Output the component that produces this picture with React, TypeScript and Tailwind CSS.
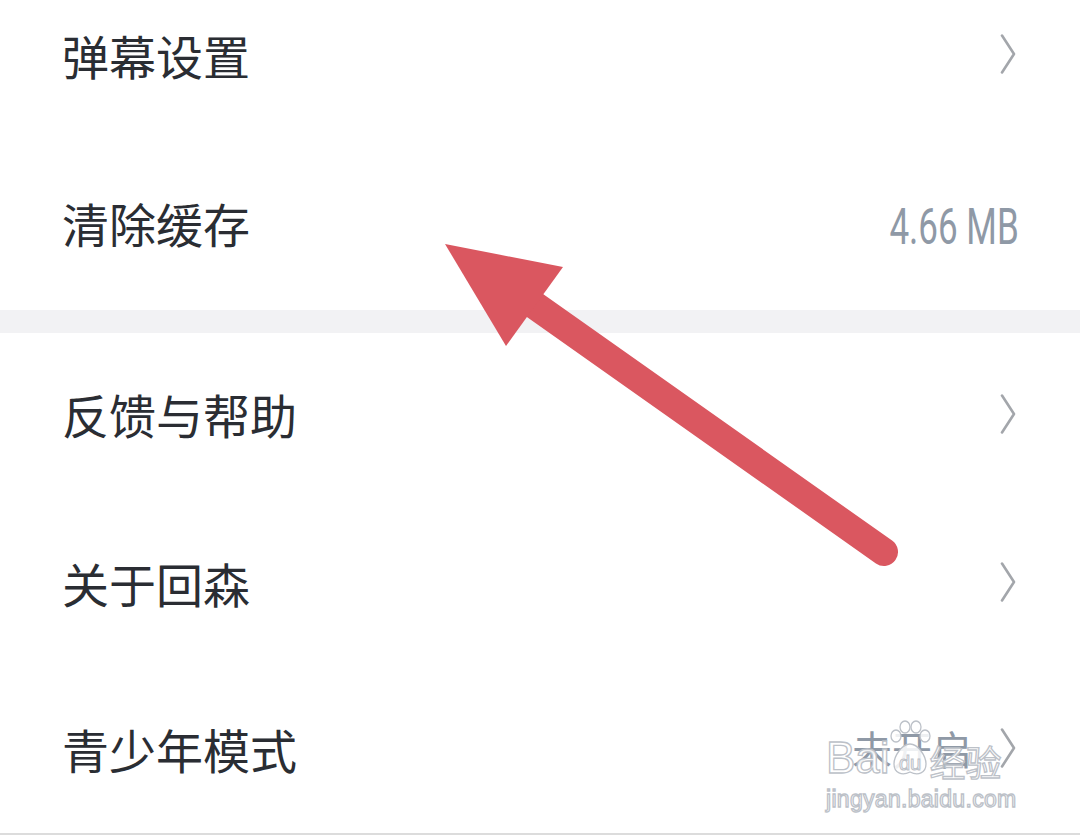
import React from 'react';

const cjk = "font-['Noto_Sans_CJK_SC','Noto_Sans',sans-serif]";

const Chevron: React.FC = () => (
  <svg width="16" height="40" viewBox="0 0 16 40" className="shrink-0">
    <path d="M2 1.5 L14 20 L2 38.5" fill="none" stroke="#a3a6ab" strokeWidth="2.6" strokeLinecap="round" strokeLinejoin="round" />
  </svg>
);

interface RowProps {
  label: string;
  right?: React.ReactNode;
  chevron?: boolean;
  className?: string;
}

const Row: React.FC<RowProps> = ({ label, right, chevron, className = 'h-[168px]' }) => (
  <div className={`flex items-center justify-between pb-[7px] pl-[62px] pr-[64px] ${className}`}>
    <span className={`${cjk} text-[47px] leading-none text-[#2a2d33]`}>{label}</span>
    <div className="flex items-center gap-[28px]">
      {right}
      {chevron && <Chevron />}
    </div>
  </div>
);

const Arrow: React.FC = () => (
  <svg className="pointer-events-none absolute inset-0" width="1080" height="836" viewBox="0 0 1080 836">
    <line x1="530" y1="302" x2="884" y2="552" stroke="#da5760" strokeWidth="28" strokeLinecap="round" />
    <polygon points="445,244 563,267 506,346" fill="#da5760" />
  </svg>
);

const Watermark: React.FC = () => {
  const stroke = '[-webkit-text-stroke:1.3px_#bcc1c8] text-white/85';
  return (
    <div className="pointer-events-none absolute left-[826px] top-[720px] flex flex-col items-start">
      <div className="flex items-end">
        <span className={`font-['Liberation_Sans',sans-serif] text-[44px] leading-none ${stroke}`}>Bai</span>
        <svg width="44" height="58" viewBox="0 0 44 58" className="-mx-[2px] mb-[2px]">
          <g fill="rgba(255,255,255,0.85)" stroke="#bcc1c8" strokeWidth="1.3">
            <ellipse cx="8" cy="16" rx="5" ry="6" />
            <ellipse cx="17" cy="7" rx="5" ry="6" />
            <ellipse cx="28" cy="7" rx="5" ry="6" />
            <ellipse cx="37" cy="16" rx="5" ry="6" />
            <path d="M22 24 C30 24 38 36 38 44 C38 53 30 56 22 52 C14 56 6 53 6 44 C6 36 14 24 22 24 Z" />
          </g>
          <text x="22" y="50" textAnchor="middle" fontSize="20" fontFamily="Liberation Sans" fill="rgba(255,255,255,0.85)" stroke="#bcc1c8" strokeWidth="1">du</text>
        </svg>
        <span className={`${cjk} text-[36px] leading-none ${stroke} mb-[1px]`}>经验</span>
      </div>
      <span className={`mt-[8px] font-['Liberation_Sans',sans-serif] text-[23px] leading-none tracking-[0.3px] ${stroke}`}>
        jingyan.baidu.com
      </span>
    </div>
  );
};

const App: React.FC = () => {
  return (
    <div className="relative h-[836px] w-[1080px] overflow-hidden bg-white">
      <div className="-mt-[27px]">
        <Row label="弹幕设置" chevron className="h-[169px]" />
        <Row
          label="清除缓存"
          right={
            <span className="mr-[-3px] mt-[8px] inline-block origin-right scale-x-[0.7] font-['Roboto',sans-serif] text-[50px] leading-none text-[#8f99a6]">
              4.66 MB
            </span>
          }
        />
        <div className="h-[23px] bg-[#f2f2f4]" />
        <Row label="反馈与帮助" chevron />
        <Row label="关于回森" chevron className="h-[169px]" />
        <div className="border-b-2 border-[#dcdcdc]">
          <Row
            label="青少年模式"
            chevron
            className="h-[163px]"
            right={<span className={`${cjk} text-[40px] leading-none text-[#8f99a6]`}>未开启</span>}
          />
        </div>
      </div>
      <Arrow />
      <Watermark />
    </div>
  );
};

export default App;
